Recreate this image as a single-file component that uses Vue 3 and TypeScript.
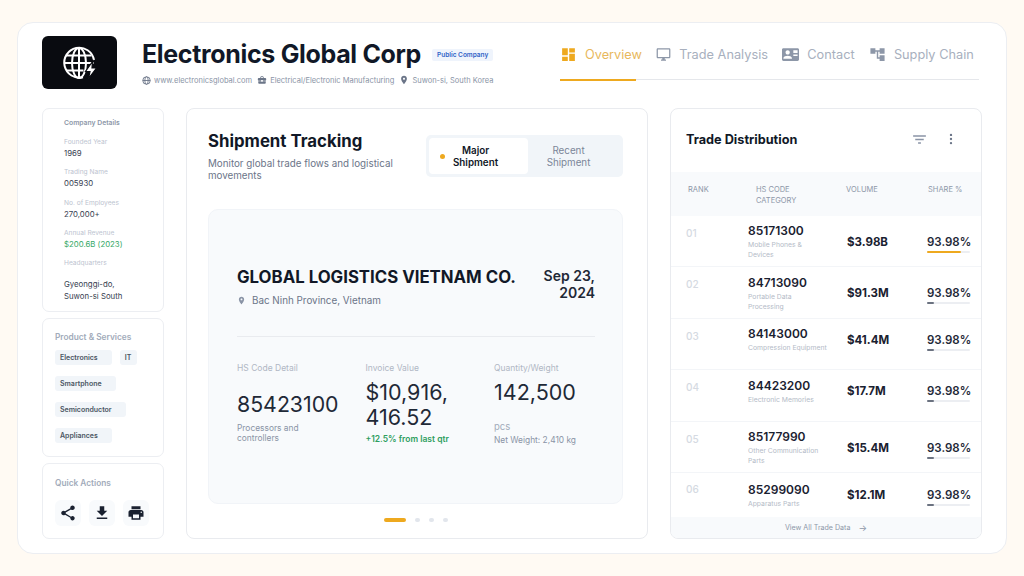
<script setup lang="ts">
type Detail = {
  label: string
  value: string
  green?: boolean
}

type TradeRow = {
  rank: string
  code: string
  desc: string
  volume: string
  fill: number
}

const icons = {
  briefcase:
    'M10 16v-1H3.01L3 19c0 1.11.89 2 2 2h14c1.11 0 2-.89 2-2v-4h-7v1h-4zm10-9h-4.01V5l-2-2h-4l-2 2v2H4c-1.1 0-2 .9-2 2v3c0 1.11.89 2 2 2h6v-2h4v2h6c1.1 0 2-.9 2-2V9c0-1.1-.9-2-2-2zm-6 0h-4V5h4v2z',
  place:
    'M12 2C8.13 2 5 5.13 5 9c0 5.25 7 13 7 13s7-7.75 7-13c0-3.87-3.13-7-7-7zm0 9.5c-1.38 0-2.5-1.12-2.5-2.5s1.12-2.5 2.5-2.5 2.5 1.12 2.5 2.5-1.12 2.5-2.5 2.5z',
  dashboard: 'M3 13h8V3H3v10zm0 8h8v-6H3v6zm10 0h8V11h-8v10zm0-18v6h8V3h-8z',
  desktop:
    'M21 2H3c-1.1 0-2 .9-2 2v12c0 1.1.9 2 2 2h7v2H8v2h8v-2h-2v-2h7c1.1 0 2-.9 2-2V4c0-1.1-.9-2-2-2zm0 14H3V4h18v12z',
  contact:
    'M22 3H2C.9 3 0 3.9 0 5v14c0 1.1.9 2 2 2h20c1.1 0 2-.9 2-2V5c0-1.1-.9-2-2-2zM8 6c1.66 0 3 1.34 3 3s-1.34 3-3 3-3-1.34-3-3 1.34-3 3-3zm6 12H2v-1c0-2 4-3.1 6-3.1s6 1.1 6 3.1v1zm8-4h-6v-2h6v2zm0-4h-6V6h6v4z',
  tree: 'M22 11V3h-7v3H9V3H2v8h7V8h2v10h4v3h7v-8h-7v3h-2V8h2v3z',
  share:
    'M18 16.08c-.76 0-1.44.3-1.96.77L8.91 12.7c.05-.23.09-.46.09-.7s-.04-.47-.09-.7l7.05-4.11c.54.5 1.25.81 2.04.81 1.66 0 3-1.34 3-3s-1.34-3-3-3-3 1.34-3 3c0 .24.04.47.09.7L8.04 9.81C7.5 9.31 6.79 9 6 9c-1.66 0-3 1.34-3 3s1.34 3 3 3c.79 0 1.5-.31 2.04-.81l7.12 4.16c-.05.21-.08.43-.08.65 0 1.61 1.31 2.92 2.92 2.92 1.61 0 2.92-1.31 2.92-2.92s-1.31-2.92-2.92-2.92z',
  download: 'M19 9h-4V3H9v6H5l7 7 7-7zM5 18v2h14v-2H5z',
  print:
    'M19 8H5c-1.66 0-3 1.34-3 3v6h4v4h12v-4h4v-6c0-1.66-1.34-3-3-3zm-3 11H8v-5h8v5zm3-7c-.55 0-1-.45-1-1s.45-1 1-1 1 .45 1 1-.45 1-1 1zm-1-9H6v4h12V3z',
  filter: 'M10 18h4v-2h-4v2zM3 6v2h18V6H3zm3 7h12v-2H6v2z',
}

const tabs = [
  { label: 'Overview', icon: icons.dashboard, size: 17, active: true },
  { label: 'Trade Analysis', icon: icons.desktop, size: 15, active: false },
  { label: 'Contact', icon: icons.contact, size: 17, active: false },
  { label: 'Supply Chain', icon: icons.tree, size: 17, active: false },
]

const details: Detail[] = [
  { label: 'Founded Year', value: '1969' },
  { label: 'Trading Name', value: '005930' },
  { label: 'No. of Employees', value: '270,000+' },
  { label: 'Annual Revenue', value: '$200.6B (2023)', green: true },
]

const actions = [icons.share, icons.download, icons.print]

const rows: TradeRow[] = [
  { rank: '01', code: '85171300', desc: 'Mobile Phones & Devices', volume: '$3.98B', fill: 79 },
  { rank: '02', code: '84713090', desc: 'Portable Data Processing', volume: '$91.3M', fill: 17 },
  { rank: '03', code: '84143000', desc: 'Compression Equipment', volume: '$41.4M', fill: 17 },
  { rank: '04', code: '84423200', desc: 'Electronic Memories', volume: '$17.7M', fill: 17 },
  { rank: '05', code: '85177990', desc: 'Other Communication Parts', volume: '$15.4M', fill: 17 },
  { rank: '06', code: '85299090', desc: 'Apparatus Parts', volume: '$12.1M', fill: 17 },
]
</script>

<template>
  <div class="page">
    <div class="shell">
      <header class="header">
        <div class="logo">
          <svg width="36" height="36" viewBox="0 0 36 36" fill="none" stroke="#fff" stroke-width="2">
            <path d="M21 32.200A15 15 0 1 1 32 15" />
            <ellipse cx="17" cy="18" rx="7" ry="15" />
            <path d="M17 3v30M4.500 10.500h25M2.500 18h29M4.500 25.500h17" />
            <path d="M30.500 16.500l-7 10h4.500l-1.500 7 8-10.500h-4.500z" fill="#fff" stroke="#090b10" stroke-width="1.200" />
          </svg>
        </div>
        <div class="identity">
          <div class="title-row">
            <h1>Electronics Global Corp</h1>
            <span class="badge">Public Company</span>
          </div>
          <div class="meta">
            <span class="meta-item">
              <svg width="9" height="9" viewBox="0 0 24 24" fill="none" stroke="#6b7588" stroke-width="2.4">
                <circle cx="12" cy="12" r="10" />
                <ellipse cx="12" cy="12" rx="4.5" ry="10" />
                <path d="M2 12h20" />
              </svg>
              www.electronicsglobal.com
            </span>
            <span class="meta-item">
              <svg width="10" height="10" viewBox="0 0 24 24" fill="#6b7588"><path :d="icons.briefcase" /></svg>
              Electrical/Electronic Manufacturing
            </span>
            <span class="meta-item">
              <svg width="10" height="10" viewBox="0 0 24 24" fill="#6b7588"><path :d="icons.place" /></svg>
              Suwon-si, South Korea
            </span>
          </div>
        </div>
        <nav class="tabs">
          <a v-for="tab in tabs" :key="tab.label" class="tab" :class="{ active: tab.active }">
            <svg :width="tab.size" :height="tab.size" viewBox="0 0 24 24" fill="currentColor"><path :d="tab.icon" /></svg>
            {{ tab.label }}
          </a>
        </nav>
      </header>

      <div class="content">
        <aside class="sidebar">
          <section class="side-card details">
            <h4>Company Details</h4>
            <div v-for="item in details" :key="item.label" class="detail">
              <span class="detail-label">{{ item.label }}</span>
              <span class="detail-value" :class="{ green: item.green }">{{ item.value }}</span>
            </div>
            <div class="detail hq">
              <span class="detail-label">Headquarters</span>
              <span class="detail-value">Gyeonggi-do,<br />Suwon-si South</span>
            </div>
          </section>

          <section class="side-card products">
            <h4>Product &amp; Services</h4>
            <div class="tags">
              <span class="tag">Electronics</span>
              <span class="tag short">IT</span>
              <span class="tag">Smartphone</span>
              <span class="tag">Semiconductor</span>
              <span class="tag">Appliances</span>
            </div>
          </section>

          <section class="side-card quick">
            <h4>Quick Actions</h4>
            <div class="actions">
              <button v-for="icon in actions" :key="icon" class="action">
                <svg width="18" height="18" viewBox="0 0 24 24" fill="#1a2130"><path :d="icon" /></svg>
              </button>
            </div>
          </section>
        </aside>

        <main class="shipment">
          <div class="shipment-head">
            <div class="shipment-title">
              <h2>Shipment Tracking</h2>
              <p>Monitor global trade flows and logistical movements</p>
            </div>
            <div class="segment">
              <div class="seg-btn selected">
                <i class="dot"></i>
                <span>Major<br />Shipment</span>
              </div>
              <div class="seg-btn">Recent<br />Shipment</div>
            </div>
          </div>

          <div class="ship-card">
            <div class="ship-top">
              <div>
                <h3>GLOBAL LOGISTICS VIETNAM CO.</h3>
                <div class="location">
                  <svg width="9" height="9" viewBox="0 0 24 24" fill="#8a94a6"><path :d="icons.place" /></svg>
                  Bac Ninh Province, Vietnam
                </div>
              </div>
              <div class="ship-date">Sep 23,<br />2024</div>
            </div>
            <div class="ship-stats">
              <div class="stat">
                <span class="stat-label">HS Code Detail</span>
                <span class="stat-value hs">85423100</span>
                <span class="stat-note">Processors and<br />controllers</span>
              </div>
              <div class="stat">
                <span class="stat-label">Invoice Value</span>
                <span class="stat-value">$10,916,<br />416.52</span>
                <span class="stat-up">+12.5% from last qtr</span>
              </div>
              <div class="stat">
                <span class="stat-label">Quantity/Weight</span>
                <span class="stat-value">142,500</span>
                <span class="stat-unit">pcs</span>
                <span class="stat-note">Net Weight: 2,410 kg</span>
              </div>
            </div>
          </div>

          <div class="pager">
            <i class="pager-bar"></i>
            <i class="pager-dot"></i>
            <i class="pager-dot"></i>
            <i class="pager-dot"></i>
          </div>
        </main>

        <section class="trade">
          <div class="trade-head">
            <h2>Trade Distribution</h2>
            <svg class="filter" width="17" height="17" viewBox="0 0 24 24" fill="#8a94a6"><path :d="icons.filter" /></svg>
            <svg width="14" height="14" viewBox="0 0 24 24" fill="#6b7588">
              <circle cx="12" cy="5" r="2" />
              <circle cx="12" cy="12" r="2" />
              <circle cx="12" cy="19" r="2" />
            </svg>
          </div>
          <div class="table-head">
            <span class="th-rank">RANK</span>
            <span class="th-code">HS CODE<br />CATEGORY</span>
            <span class="th-volume">VOLUME</span>
            <span class="th-share">SHARE %</span>
          </div>
          <div class="table-body">
            <div v-for="row in rows" :key="row.rank" class="row">
              <span class="rank">{{ row.rank }}</span>
              <div>
                <div class="code">{{ row.code }}</div>
                <div class="desc">{{ row.desc }}</div>
              </div>
              <span class="volume">{{ row.volume }}</span>
              <div class="share">
                <span>93.98%</span>
                <div class="track">
                  <div class="fill" :class="{ top: row.rank === '01' }" :style="{ width: row.fill + '%' }"></div>
                </div>
              </div>
            </div>
          </div>
          <div class="trade-foot">
            View All Trade Data
            <span class="arrow">→</span>
          </div>
        </section>
      </div>
    </div>
  </div>
</template>

<style>
html,
body {
  margin: 0;
  background: #fffaf3;
}
</style>

<style scoped>
* {
  box-sizing: border-box;
}

.page {
  width: 1024px;
  height: 576px;
  padding: 22px 17px;
  background: #fffaf3;
  font-family: Inter, 'Liberation Sans', sans-serif;
  color: #111827;
  overflow: hidden;
}

.shell {
  height: 532px;
  padding: 13px 24px 14px 24px;
  background: #fff;
  border: 1px solid #eceef2;
  border-radius: 16px;
}

.header {
  display: flex;
  height: 53px;
  margin-bottom: 19px;
}

.logo {
  display: flex;
  align-items: center;
  justify-content: center;
  width: 75px;
  height: 53px;
  margin-right: 25px;
  background: #090b10;
  border-radius: 6px;
}

.identity {
  width: 418px;
}

.title-row {
  display: flex;
  align-items: center;
  gap: 11px;
  height: 36px;
}

h1 {
  margin: 0;
  font-size: 25px;
  font-weight: 700;
  letter-spacing: -0.33px;
}

.badge {
  margin-top: 2px;
  padding: 2px 5px;
  background: #eff4fc;
  border-radius: 2px;
  color: #2f63c7;
  font-size: 6.5px;
  font-weight: 600;
}

.meta {
  display: flex;
  gap: 5px;
  margin-top: 3px;
  color: #8a94a6;
  font-size: 7.5px;
}

.meta-item {
  display: flex;
  align-items: center;
  gap: 3px;
}

.tabs {
  position: relative;
  display: flex;
  flex: 1;
  align-items: flex-start;
  gap: 14.3px;
  height: 44px;
  margin-right: 3px;
  border-bottom: 1.5px solid #e5e7eb;
}

.tab {
  display: flex;
  align-items: center;
  gap: 8px;
  height: 36px;
  color: #a8b0be;
  font-size: 12.75px;
}

.tab svg {
  color: #8d97a8;
}

.tab.active {
  color: #e8b85c;
}

.tab.active svg {
  color: #eea91f;
}

.tab.active::after {
  content: '';
  position: absolute;
  left: 0;
  bottom: -1.5px;
  width: 76px;
  height: 1.5px;
  background: #eea91f;
}

.content {
  display: flex;
  gap: 22px;
  height: 431px;
}

.sidebar {
  display: flex;
  flex-direction: column;
  gap: 6px;
  width: 122px;
  flex: none;
}

.side-card {
  flex: none;
  background: #fff;
  border: 1px solid #eceef2;
  border-radius: 7px;
}

h4 {
  margin: 0;
  font-weight: 600;
}

.details {
  height: 204px;
  padding: 9px 6px 0 21px;
}

.details h4 {
  margin-bottom: 10px;
  color: #8d97a8;
  font-size: 6.8px;
}

.detail {
  display: flex;
  flex-direction: column;
  height: 30.3px;
}

.detail-label {
  flex: none;
  height: 10px;
  color: #bcc3cf;
  font-size: 6.6px;
  line-height: 10px;
}

.detail-value {
  color: #374151;
  font-size: 7.8px;
  line-height: 12px;
}

.detail-value.green {
  color: #35a866;
}

.hq {
  height: auto;
}

.hq .detail-label {
  height: 20px;
}

.products {
  height: 139px;
  padding: 13px 12px 0 12px;
}

.products h4,
.quick h4 {
  color: #a2abba;
  font-size: 8.3px;
}

.tags {
  display: flex;
  flex-wrap: wrap;
  gap: 11px 8px;
  margin-top: 8px;
}

.tag {
  height: 15px;
  padding: 0 14px 0 5px;
  background: #f1f5f9;
  border-radius: 3px;
  color: #4b5563;
  font-size: 7px;
  font-weight: 600;
  line-height: 15px;
}

.tag.short {
  padding: 0 6px 0 5px;
}

.quick {
  height: 76px;
  padding: 14px 12px 0;
}

.actions {
  display: flex;
  gap: 8px;
  margin-top: 12px;
}

.action {
  display: flex;
  align-items: center;
  justify-content: center;
  width: 26px;
  height: 26px;
  padding: 0;
  background: #f8fafc;
  border: 0;
  border-radius: 6px;
}

.shipment {
  width: 462px;
  flex: none;
  padding: 22px 24px 0 21px;
  border: 1px solid #e9ebef;
  border-radius: 8px;
}

.shipment-head {
  display: flex;
  justify-content: space-between;
  height: 78px;
}

.shipment-title {
  width: 200px;
}

h2 {
  margin: 0;
  font-weight: 700;
}

.shipment-title h2 {
  font-size: 16.8px;
  line-height: 21px;
}

.shipment-title p {
  margin: 6px 0 0;
  color: #6b7588;
  font-size: 9.8px;
  line-height: 12px;
}

.segment {
  display: flex;
  width: 197px;
  height: 42px;
  margin-top: 4px;
  padding: 3px;
  background: #f1f5f9;
  border-radius: 5px;
}

.seg-btn {
  display: flex;
  flex: 1;
  align-items: center;
  justify-content: center;
  padding: 1px 11px 0 0;
  color: #7b8598;
  font-size: 9.8px;
  line-height: 12px;
  text-align: center;
}

.seg-btn.selected {
  flex: none;
  width: 99px;
  gap: 8px;
  justify-content: flex-start;
  padding: 1px 0 0 11px;
  background: #fff;
  border-radius: 4px;
  color: #111827;
  font-weight: 600;
}

.dot {
  width: 5px;
  height: 5px;
  background: #eea91f;
  border-radius: 50%;
}

.ship-card {
  height: 295px;
  padding: 57px 27px 0 28px;
  background: #f8fafc;
  border: 1px solid #f1f4f8;
  border-radius: 10px;
}

.ship-top {
  display: flex;
  justify-content: space-between;
  height: 70px;
  border-bottom: 1px solid #e9ebef;
}

h3 {
  margin: 0;
  font-size: 16.8px;
  font-weight: 700;
  line-height: 21px;
  white-space: nowrap;
}

.location {
  display: flex;
  align-items: center;
  gap: 6px;
  margin-top: 6px;
  color: #6b7588;
  font-size: 9.85px;
  line-height: 12px;
}

.ship-date {
  font-size: 14px;
  font-weight: 600;
  line-height: 17px;
  text-align: right;
  color: #1f2937;
}

.ship-stats {
  display: grid;
  grid-template-columns: repeat(3, 128.5px);
  padding-top: 26px;
}

.stat {
  display: flex;
  flex-direction: column;
}

.stat-label {
  height: 11px;
  color: #b0b7c4;
  font-size: 8.5px;
  line-height: 11px;
}

.stat-value {
  margin-top: 6px;
  font-size: 21.5px;
  font-weight: 400;
  line-height: 25px;
  color: #1f2937;
}

.stat-value.hs {
  margin-top: 18px;
  margin-bottom: 6px;
  font-size: 21.3px;
}

.stat-note {
  color: #8a94a6;
  font-size: 8.4px;
  line-height: 10px;
}

.stat-up {
  margin-top: 4px;
  color: #2f9e5f;
  font-size: 8.5px;
  font-weight: 600;
  line-height: 11px;
}

.stat-unit {
  margin-top: 15.5px;
  margin-bottom: 3.5px;
  color: #a2abba;
  font-size: 9.5px;
  line-height: 11px;
}

.pager {
  display: flex;
  align-items: center;
  justify-content: center;
  gap: 9px;
  margin-top: 14px;
}

.pager i {
  display: block;
  height: 4px;
  border-radius: 2px;
}

.pager-bar {
  width: 22px;
  background: #eea91f;
}

.pager-dot {
  width: 5px;
  background: #e2e6ec;
}

.trade {
  display: flex;
  flex-direction: column;
  flex: none;
  width: 312px;
  border: 1px solid #e9ebef;
  border-radius: 8px;
  overflow: hidden;
}

.trade-head {
  display: flex;
  align-items: center;
  height: 63px;
  padding: 0 23px 2px 15px;
}

.trade-head h2 {
  flex: 1;
  font-size: 12.7px;
}

.filter {
  margin-right: 16px;
}

.table-head,
.row {
  display: grid;
  grid-template-columns: 77px 99px 80px 1fr;
}

.table-head {
  height: 44px;
  padding-top: 12px;
  background: #f8fafc;
  color: #8d97a8;
  font-size: 7.5px;
  line-height: 11px;
}

.th-rank {
  padding-left: 17px;
}

.th-code {
  padding-left: 8px;
}

.th-volume {
  margin-left: -1px;
}

.th-share {
  padding-left: 1px;
}

.table-body {
  flex: 1;
}

.row {
  align-items: center;
  align-content: start;
  height: 51.5px;
  padding-top: 7.5px;
  border-bottom: 1px solid #f3f5f8;
}

.row:last-child {
  height: 43.5px;
  padding-top: 8.5px;
  border-bottom: 0;
}

.rank {
  align-self: start;
  padding: 3.5px 0 0 15px;
  color: #d5dae2;
  font-size: 10px;
  font-weight: 500;
}

.row:last-child .rank {
  padding-top: 1px;
}

.code {
  font-size: 12px;
  font-weight: 600;
  line-height: 16px;
  color: #1a2130;
}

.desc {
  width: 78px;
  margin-top: 1px;
  color: #b4bbc7;
  font-size: 6.8px;
  line-height: 10px;
}

.row:nth-child(3) .desc {
  white-space: nowrap;
}

.volume {
  font-size: 11.5px;
  font-weight: 700;
  color: #1a2130;
}

.share {
  margin-top: 3px;
  font-size: 11.5px;
  font-weight: 600;
  line-height: 16px;
  color: #1f2937;
}

.track {
  width: 43px;
  height: 2px;
  margin-top: 1px;
  background: #eceef2;
  border-radius: 1px;
}

.fill {
  height: 2px;
  background: #6b7280;
  border-radius: 1px;
}

.fill.top {
  background: #eea91f;
}

.trade-foot {
  display: flex;
  flex: none;
  align-items: center;
  justify-content: center;
  gap: 8px;
  height: 21.5px;
  padding-top: 1px;
  background: #f8fafc;
  color: #8d97a8;
  font-size: 7.1px;
}

.arrow {
  font-size: 9px;
}
</style>
